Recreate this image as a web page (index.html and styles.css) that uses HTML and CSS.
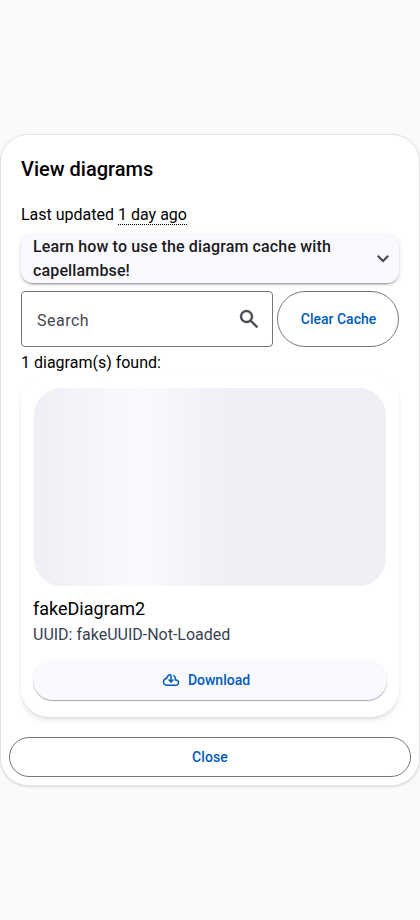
FILE: index.html
```html
<!DOCTYPE html>
<html lang="en">
<head>
<meta charset="utf-8">
<title>View diagrams</title>
<link rel="stylesheet" href="styles.css">
</head>
<body>
<main class="dialog">
  <div class="content">
    <h2 class="title">View diagrams</h2>
    <p class="updated">Last updated <span class="age">1 day ago</span></p>
    <div class="expander">
      <span class="expander-title">Learn how to use the diagram cache with capellambse!</span>
      <svg class="chevron" viewBox="0 -960 960 960"><path d="M480-345 240-585l56-56 184 184 184-184 56 56-240 240Z"/></svg>
    </div>
    <div class="tools">
      <div class="search">
        <span class="search-label">Search</span>
        <svg class="search-icon" viewBox="0 -960 960 960"><path d="M784-120 532-372q-30 24-69 38t-83 14q-109 0-184.500-75.500T120-580q0-109 75.500-184.500T380-840q109 0 184.500 75.500T640-580q0 44-14 83t-38 69l252 252-56 56ZM380-400q75 0 127.500-52.500T560-580q0-75-52.500-127.500T380-760q-75 0-127.500 52.500T200-580q0 75 52.500 127.500T380-400Z"/></svg>
      </div>
      <button class="button outlined clear">Clear Cache</button>
    </div>
    <p class="count">1 diagram(s) found:</p>
    <article class="card">
      <div class="skeleton"></div>
      <h3 class="name">fakeDiagram2</h3>
      <p class="uuid">UUID: fakeUUID-Not-Loaded</p>
      <button class="button raised">
        <svg class="cloud" viewBox="0 -960 960 960"><path d="M260-160q-91 0-155.500-63T40-377q0-78 47-139t123-78q17-72 85-137t145-65q33 0 56.500 23.500T520-716v242l64-62 56 56-160 160-160-160 56-56 64 62v-242q-76 14-118 73.500T280-520h-20q-58 0-99 41t-41 99q0 58 41 99t99 41h480q42 0 71-29t29-71q0-42-29-71t-71-29h-60v-80q0-48-22-89.500T600-680v-93q74 35 117 103.500T760-520q69 8 114.500 59.500T920-340q0 75-52.500 127.500T740-160H260Z"/></svg>
        Download
      </button>
    </article>
  </div>
  <button class="button outlined close">Close</button>
</main>
</body>
</html>
```
FILE: styles.css
```css
* { box-sizing: border-box; }
body {
  margin: 0;
  height: 920px;
  display: flex;
  align-items: center;
  background: #fafafa;
  color: #000;
  font: 400 16px/24px Roboto, sans-serif;
}
h2, h3, p { margin: 0; font-weight: 400; }
.dialog {
  width: 420px;
  height: 652px;
  padding: 8px;
  border: 1px solid #e2e2e9;
  border-radius: 28px;
  background: #fff;
  box-shadow: 0 1px 3px rgba(0, 0, 0, .1), 0 1px 2px -1px rgba(0, 0, 0, .1);
}
.content { padding: 10px 12px 0; }
.title {
  font-size: 20px;
  line-height: 32px;
  font-weight: 500;
}
.updated { margin-top: 18px; }
.age { border-bottom: 1px dotted #000; }
.expander {
  display: flex;
  align-items: center;
  height: 48px;
  margin-top: 8px;
  padding: 0 5px 0 12px;
  border-radius: 12px;
  background: #faf9ff;
  color: #1a1b20;
  font-weight: 500;
  letter-spacing: .14px;
  box-shadow: 0 3px 1px -2px rgba(0, 0, 0, .2), 0 2px 2px rgba(0, 0, 0, .14), 0 1px 5px rgba(0, 0, 0, .12);
}
.expander-title { flex: 1; }
.chevron {
  width: 24px;
  height: 24px;
  margin: 0 -1px 0 12px;
  fill: #44474e;
}
.tools {
  display: flex;
  gap: 4px;
  height: 56px;
  margin-top: 8px;
}
.search {
  flex: 1;
  display: flex;
  align-items: center;
  justify-content: space-between;
  padding: 0 11px 0 15px;
  border: 1px solid #74777f;
  border-radius: 4px;
  color: #44474e;
  letter-spacing: .5px;
}
.search-label { padding-top: 3px; }
.search-icon {
  width: 24px;
  height: 24px;
  fill: #44474e;
  stroke: #44474e;
  stroke-width: 14px;
}
.button {
  display: flex;
  align-items: center;
  justify-content: center;
  height: 40px;
  padding: 0;
  border: 0;
  border-radius: 28px;
  color: #005cbb;
  font: 500 14px/20px Roboto, sans-serif;
  letter-spacing: .096px;
}
.outlined {
  border: 1px solid #74777f;
  background: #fff;
}
.clear {
  width: 122px;
  height: 56px;
  padding-left: 1px;
  letter-spacing: 0;
}
.count { margin-top: 4px; }
.card {
  height: 342px;
  padding: 13px 12px;
  border-radius: 28px;
  background: #fff;
  box-shadow: 0 4px 6px -1px rgba(0, 0, 0, .1), 0 2px 4px -2px rgba(0, 0, 0, .1);
}
.skeleton {
  height: 198px;
  margin: 0 1px;
  border-radius: 27px;
  background: linear-gradient(90deg, #eff0f6, #f8fafc 30%, #eff0f6 56%);
}
.name {
  margin-top: 9px;
  font-size: 18px;
  line-height: 28px;
}
.uuid {
  margin-top: 0;
  color: #374151;
}
.raised {
  gap: 8px;
  width: 100%;
  margin-top: 13px;
  padding-right: 8px;
  letter-spacing: 0;
  background: #faf9ff;
  box-shadow: 0 1px 1px rgba(0, 0, 0, .35);
}
.cloud {
  width: 18px;
  height: 18px;
  fill: #005cbb;
}
.close { width: 100%; margin-top: 20px; }
```
